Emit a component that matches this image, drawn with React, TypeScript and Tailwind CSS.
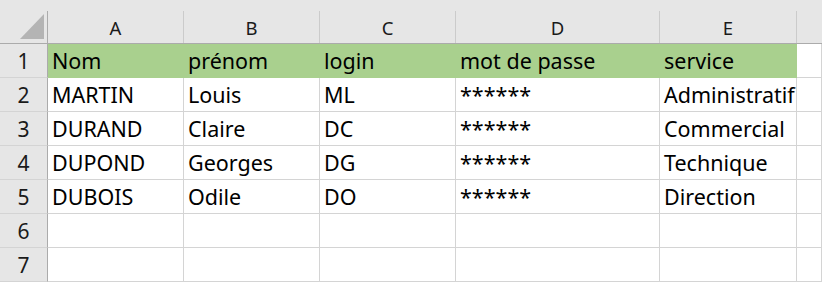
const columns = ["A", "B", "C", "D", "E", ""];

const rows: string[][] = [
  ["Nom", "prénom", "login", "mot de passe", "service"],
  ["MARTIN", "Louis", "ML", "******", "Administratif"],
  ["DURAND", "Claire", "DC", "******", "Commercial"],
  ["DUPOND", "Georges", "DG", "******", "Technique"],
  ["DUBOIS", "Odile", "DO", "******", "Direction"],
  [],
  [],
];

function Corner() {
  return (
    <div className="flex h-[44px] border-b border-[#ababab] bg-[#e6e6e6]">
      <div className="flex flex-1 items-end justify-end pb-[4px] pr-[3px]">
        <svg width="24" height="25" viewBox="0 0 24 25">
          <polygon points="24,0 24,25 0,25" fill="#b4b4b4" />
        </svg>
      </div>
      <div className="mt-[11px] w-px bg-[#ababab]" />
    </div>
  );
}

function ColumnHeader({ label }: { label: string }) {
  return (
    <div className="flex h-[44px] border-b border-[#ababab] bg-[#e6e6e6]">
      <div className="flex flex-1 items-end justify-center pb-[3px] text-[18.5px] leading-[24px] text-[#1a1a1a]">
        {label}
      </div>
      {label && <div className="mt-[11px] w-px bg-[#cbcbcb]" />}
    </div>
  );
}

function RowHeader({ n }: { n: number }) {
  return (
    <div className="flex h-[34px] items-center justify-center border-b border-r border-b-[#d4d4d4] border-r-[#ababab] bg-[#e6e6e6] text-[21px] leading-[28px] text-[#1a1a1a]">
      {n}
    </div>
  );
}

function Cell({ value, header }: { value?: string; header: boolean }) {
  return (
    <div
      className={`flex h-[34px] items-center overflow-hidden whitespace-nowrap border-b border-r pl-[4px] text-[21.5px] leading-[28px] text-black ${
        header ? "border-[#a9d08e] bg-[#a9d08e]" : "border-[#d4d4d4] bg-white"
      }`}
    >
      {value}
    </div>
  );
}

export default function App() {
  return (
    <div
      className="grid h-[282px] w-[822px] grid-cols-[48px_136px_136px_136px_204px_137px_1fr] overflow-hidden bg-white"
      style={{ fontFamily: '"Noto Sans", "Open Sans", sans-serif' }}
    >
      <Corner />
      {columns.map((c, i) => (
        <ColumnHeader key={i} label={c} />
      ))}
      {rows.map((row, r) => (
        <div key={r} className="contents">
          <RowHeader n={r + 1} />
          {columns.map((_, c) => (
            <Cell key={c} value={row[c]} header={r === 0 && c < 5} />
          ))}
        </div>
      ))}
    </div>
  );
}
